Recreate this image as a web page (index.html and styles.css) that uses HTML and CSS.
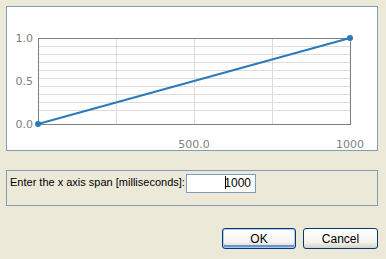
FILE: index.html
```html
<!DOCTYPE html>
<html lang="en">
<head>
    <meta charset="UTF-8">
    <title>X axis span</title>
    <link rel="stylesheet" href="styles.css">
</head>
<body>
    <div class="dialog">
        <!-- chart preview -->
        <section class="chart-panel">
            <svg class="chart" width="369" height="143" viewBox="0 0 369 143">
                <g class="grid">
                    <line x1="31" y1="39.5" x2="343" y2="39.5"/>
                    <line x1="31" y1="47.5" x2="343" y2="47.5"/>
                    <line x1="31" y1="55.5" x2="343" y2="55.5"/>
                    <line x1="31" y1="63.5" x2="343" y2="63.5"/>
                    <line x1="31" y1="71.5" x2="343" y2="71.5"/>
                    <line x1="31" y1="79.5" x2="343" y2="79.5"/>
                    <line x1="31" y1="87.5" x2="343" y2="87.5"/>
                    <line x1="31" y1="95.5" x2="343" y2="95.5"/>
                    <line x1="31" y1="103.5" x2="343" y2="103.5"/>
                    <line x1="109.5" y1="31" x2="109.5" y2="117"/>
                    <line x1="187.5" y1="31" x2="187.5" y2="117"/>
                    <line x1="265.5" y1="31" x2="265.5" y2="117"/>
                </g>
                <rect class="plot-frame" x="31.5" y="31.5" width="312" height="86"/>
                <g class="labels">
                    <text x="26" y="35" text-anchor="end">1.0</text>
                    <text x="26" y="78" text-anchor="end">0.5</text>
                    <text x="26" y="121" text-anchor="end">0.0</text>
                    <text x="187" y="141" text-anchor="middle">500.0</text>
                    <text x="343" y="141" text-anchor="middle">1000</text>
                </g>
                <line class="series" x1="31" y1="117" x2="343" y2="31"/>
                <circle class="point" cx="31" cy="117" r="3"/>
                <circle class="point" cx="343" cy="31" r="3"/>
            </svg>
        </section>

        <section class="span-box">
            <label for="span">Enter the x axis span [milliseconds]:</label>
            <div class="field"><span class="caret"></span>1000</div>
        </section>

        <div class="buttons">
            <button class="btn btn-default">OK</button>
            <button class="btn">Cancel</button>
        </div>
    </div>
</body>
</html>
```

FILE: styles.css
```css
body {
    margin: 0;
    background: #ece9d8;
    font-family: "Liberation Sans", sans-serif;
    font-size: 11px;
    color: #000;
}

.dialog {
    padding: 6px 8px 0 6px;
    width: 372px;
}

.chart-panel {
    background: #fff;
    border: 1px solid #7f9db9;
    height: 143px;
}

.chart {
    display: block;
}

.grid line {
    stroke: #dcdcdc;
    stroke-width: 1;
}

.plot-frame {
    fill: none;
    stroke: #808080;
    stroke-width: 1;
}

.labels text {
    fill: #808080;
    font-family: "DejaVu Sans", sans-serif;
    font-size: 11px;
}

.series {
    stroke: #2a7ab9;
    stroke-width: 2;
}

.point {
    fill: #2a7ab9;
}

.span-box {
    margin-top: 19px;
    height: 34px;
    border: 1px solid #7f9db9;
    display: flex;
    align-items: flex-start;
    padding: 0 0 0 3px;
}

.span-box label {
    margin-top: 5px;
    font-size: 11px;
    white-space: nowrap;
    flex: 0 0 176px;
    min-width: 0;
}

.field {
    margin-top: 3px;
    width: 64px;
    height: 17px;
    line-height: 17px;
    border: 1px solid #7f9db9;
    background: #fff;
    text-align: right;
    padding-right: 4px;
    font-size: 12px;
}

.caret {
    display: inline-block;
    width: 1px;
    height: 13px;
    background: #000;
    vertical-align: -2px;
    margin-right: -2px;
}

.buttons {
    display: flex;
    justify-content: flex-end;
    gap: 7px;
    margin-top: 22px;
}

.btn {
    width: 75px;
    height: 21px;
    padding: 0;
    border: 1px solid #003c74;
    border-radius: 3px;
    background: linear-gradient(#ffffff, #f4f3ee 70%, #d6d0c5);
    font-family: "Liberation Sans", sans-serif;
    font-size: 12px;
    color: #000;
}

.btn-default {
    box-shadow: inset 0 0 0 1px #b0c8f0, inset 0 -2px 0 1px #6b8fd8;
    width: 74px;
}
```
